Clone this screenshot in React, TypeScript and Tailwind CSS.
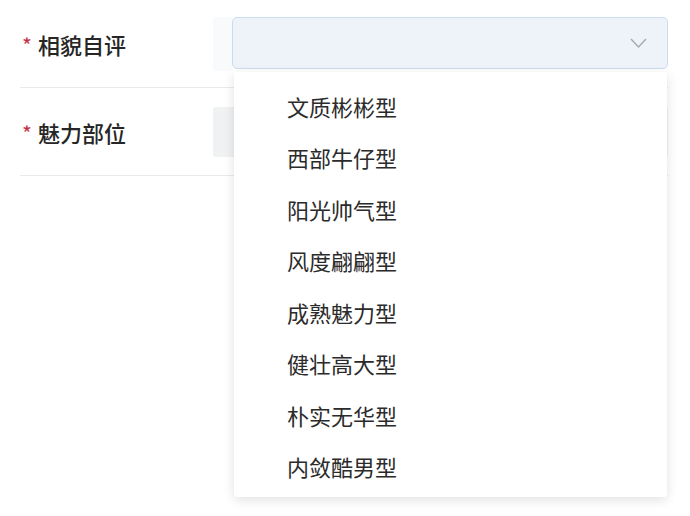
const OPTIONS = [
  '文质彬彬型',
  '西部牛仔型',
  '阳光帅气型',
  '风度翩翩型',
  '成熟魅力型',
  '健壮高大型',
  '朴实无华型',
  '内敛酷男型',
];

const FONT = `font-['Noto_Sans_CJK_SC','Noto_Sans',sans-serif]`;

function Label({ text }: { text: string }) {
  return (
    <div className="w-[193px] flex items-center shrink-0">
      <span className="text-[#c4314b] text-[21px] leading-none mt-1 w-[18px] pl-[2px]">*</span>
      <span className="text-[22px] font-medium text-[#262626] leading-none">{text}</span>
    </div>
  );
}

export default function App() {
  return (
    <div className={`relative w-[690px] h-[516px] bg-white overflow-hidden ${FONT}`}>
      <div className="pl-5 w-[668px]">
        {/* 相貌自评 */}
        <div className="h-[88px] flex items-center border-b border-[#e8eaed]">
          <Label text="相貌自评" />
          <div className="w-[19px] h-[54px] bg-[#f8fafb]"></div>
          <div className="flex-1 h-[52px] mb-[2px] rounded-[5px] border border-[#cbdcee] bg-[#eef3f9] flex items-center justify-end pr-5">
            <svg width="17" height="10" viewBox="0 0 17 10" fill="none">
              <polyline points="1,1 8.5,9 16,1" stroke="#a3aab3" strokeWidth="1.4" />
            </svg>
          </div>
        </div>
        {/* 魅力部位 */}
        <div className="h-[88px] flex items-center border-b border-[#e8eaed]">
          <Label text="魅力部位" />
          <div className="flex-1 h-[50px] bg-[#eff1f3] rounded-[3px]"></div>
        </div>
      </div>

      {/* 下拉菜单 */}
      <div className="absolute left-[234px] top-[72px] w-[433px] h-[425px] bg-white rounded-[3px] shadow-[0_3px_12px_rgba(0,0,0,0.12)] pt-2">
        {OPTIONS.map(opt => (
          <div key={opt} className="h-[51.5px] flex items-center pl-[53px] text-[22px] text-[#2b2b2b] leading-none">
            {opt}
          </div>
        ))}
      </div>
    </div>
  );
}
